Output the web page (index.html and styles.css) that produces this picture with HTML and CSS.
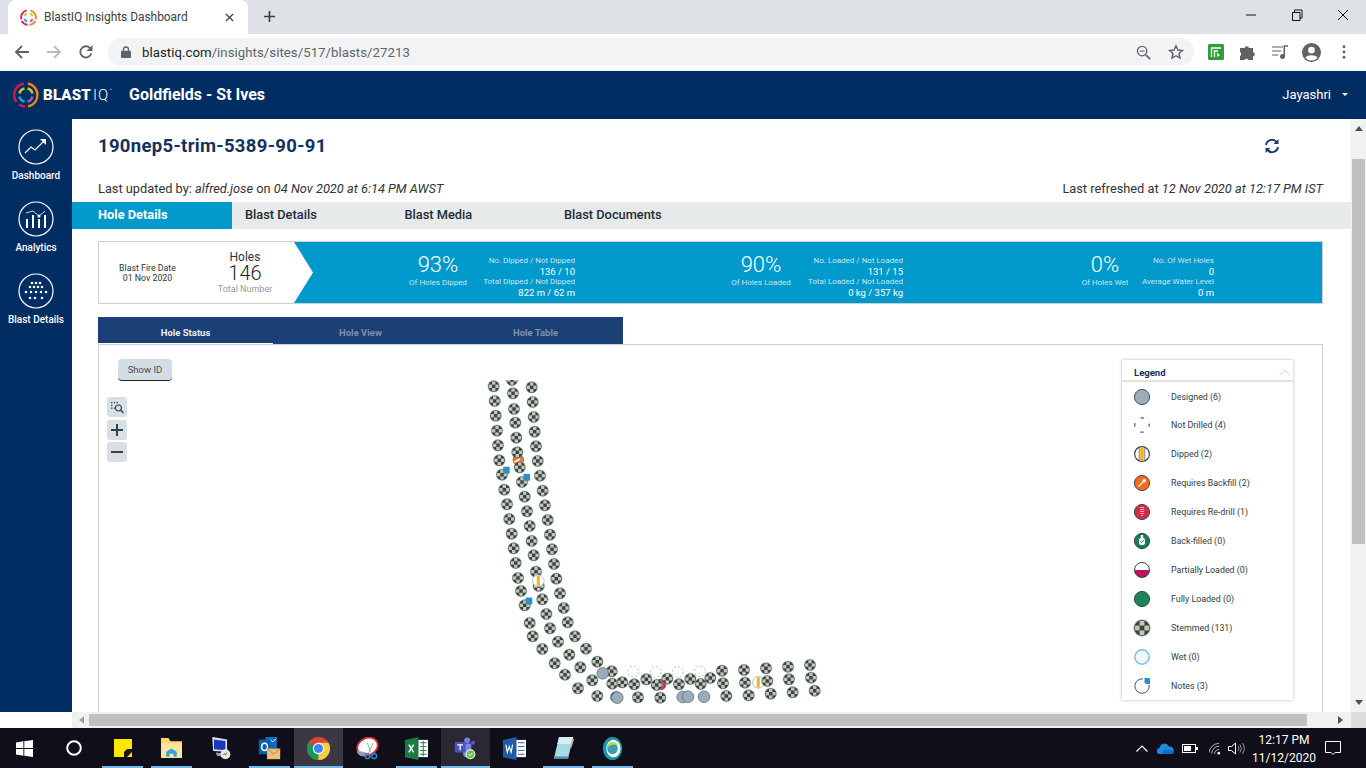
FILE: index.html
```html
<!DOCTYPE html>
<html lang="en">
<head>
<meta charset="utf-8">
<title>BlastIQ Insights Dashboard</title>
<link rel="stylesheet" href="styles.css">
</head>
<body>
<div class="screen">
  <div class="tabstrip">
    <div class="tab">
      <svg class="favicon" viewBox="-9 -9 18 18"><g fill="none" stroke-width="2"><path d="M-2-7.600A8 8 0 0 0-7.600 2" stroke="#e5176f"/><path d="M2-7.600A8 8 0 0 1 7.600 2" stroke="#f58220"/><path d="M7.200 3.600A8 8 0 0 1 1 7.900" stroke="#f58220"/><path d="M-7.200 3.600A8 8 0 0 0-1 7.900" stroke="#e5176f"/><path d="M-1.500-4.300A4.500 4.500 0 0 0-4.300-1.500" stroke="#c7c929"/><path d="M1.500-4.300A4.500 4.500 0 0 1 4.300-1.500" stroke="#c7c929"/><path d="M4.300 1.500A4.500 4.500 0 0 1 1.500 4.300" stroke="#a35bb5"/><path d="M-4.300 1.500A4.500 4.500 0 0 0-1.500 4.300" stroke="#1aa6d8"/></g></svg>
      <span class="tab-title">BlastIQ Insights Dashboard</span>
      <svg class="tab-close" viewBox="0 0 10 10"><path d="M1 1l8 8M9 1l-8 8" stroke="#4a4d51" stroke-width="1.600"/></svg>
    </div>
    <svg class="newtab" viewBox="0 0 14 14"><path d="M7 1v12M1 7h12" stroke="#3c4043" stroke-width="1.800"/></svg>
    <div class="winctl">
      <svg viewBox="0 0 46 30"><path d="M18 15h10" stroke="#111" stroke-width="1"/></svg>
      <svg viewBox="0 0 46 30"><path d="M18.500 12.500h7.500v8h-7.500zM20.500 12.500v-2.500h7.500v8h-2" fill="none" stroke="#111"/></svg>
      <svg viewBox="0 0 46 30"><path d="M18 10l10 10M28 10l-10 10" stroke="#111"/></svg>
    </div>
  </div>
  <div class="toolbar">
    <svg class="tb-icon" viewBox="0 0 16 16"><path d="M15 8H2M8 2L2 8l6 6" fill="none" stroke="#5f6368" stroke-width="1.800"/></svg>
    <svg class="tb-icon" viewBox="0 0 16 16"><path d="M1 8h13M8 2l6 6-6 6" fill="none" stroke="#b9bbbe" stroke-width="1.800"/></svg>
    <svg class="tb-icon" viewBox="0 0 16 16"><path d="M13.300 9.500A5.600 5.600 0 1 1 12 4" fill="none" stroke="#5f6368" stroke-width="1.800"/><path d="M14.500 1v6h-6z" fill="#5f6368"/></svg>
    <div class="omnibox">
      <svg class="lock" viewBox="0 0 10 12"><path d="M2.500 5V3.500a2.500 2.500 0 0 1 5 0V5" fill="none" stroke="#5f6368" stroke-width="1.300"/><rect y="4.800" width="10" height="7.200" rx="1" fill="#5f6368"/></svg>
      <span class="url"><b>blastiq.com</b>/insights/sites/517/blasts/27213</span>
      <svg class="omni-icon" viewBox="0 0 16 16"><circle cx="6.500" cy="6.500" r="5" fill="none" stroke="#5f6368" stroke-width="1.400"/><path d="M10.500 10.500L15 15" stroke="#5f6368" stroke-width="1.800"/><path d="M4 6.500h5" stroke="#5f6368" stroke-width="1.200"/></svg>
      <svg class="omni-icon star" viewBox="0 0 16 16"><path d="M8 1.800l1.900 4.200 4.500.5-3.400 3 1 4.500L8 11.700 4 14l1-4.500-3.400-3 4.500-.5z" fill="none" stroke="#5f6368" stroke-width="1.400"/></svg>
    </div>
    <svg class="ext-icon" viewBox="0 0 16 16"><rect width="16" height="16" rx="1.500" fill="#2f9e3f"/><path d="M3.500 13V4H13M6.500 13V7H10" fill="none" stroke="#fff" stroke-width="1.300"/><path d="M9 9l3 2-3 2z" fill="#fff"/></svg>
    <svg class="ext-icon" viewBox="0 0 16 16"><path d="M0 4h4.500a2.300 2.300 0 0 1 4.500 0h4v4a2.300 2.300 0 0 1 0 4.500V16H8.500a2.300 2.300 0 0 0-4 0H0v-4a2.300 2.300 0 0 0 0-4z" fill="#5f6368"/></svg>
    <svg class="ext-icon" viewBox="0 0 16 16"><path d="M0 3h11M0 7h9M0 11h6" stroke="#5f6368" stroke-width="1.200"/><circle cx="10.500" cy="12.500" r="2.500" fill="#5f6368"/><path d="M12.300 12.500V2H16" fill="none" stroke="#5f6368" stroke-width="1.500"/></svg>
    <svg class="ext-icon avatar" viewBox="0 0 20 20"><circle cx="10" cy="10" r="10" fill="#5f6368"/><circle cx="10" cy="7.500" r="3.500" fill="#fff"/><path d="M3.500 15.500c2-3.500 11-3.500 13 0a8.500 8.500 0 0 1-13 0z" fill="#fff"/></svg>
    <svg class="ext-icon dots" viewBox="0 0 4 16"><circle cx="2" cy="2" r="1.600" fill="#5f6368"/><circle cx="2" cy="8" r="1.600" fill="#5f6368"/><circle cx="2" cy="14" r="1.600" fill="#5f6368"/></svg>
  </div>
  <header class="apphead">
    <svg class="logo" viewBox="-13 -13 26 26"><g fill="none" stroke-width="2.400"><path d="M-2-11.500A11.600 11.600 0 0 0-9.500 7" stroke="#d9145f"/><path d="M-7 9.500A11.600 11.600 0 0 0-1 11.500" stroke="#d9145f"/><path d="M2-11.500A11.600 11.600 0 0 1 11.500 0A11.600 11.600 0 0 1 2 11.500" stroke="#f58220"/><path d="M-1.500-6.500A6.600 6.600 0 0 0-6.500-1.500" stroke="#c7c929"/><path d="M1.500-6.500A6.600 6.600 0 0 1 6.500-1.500" stroke="#c7c929"/><path d="M6.500 1.500A6.600 6.600 0 0 1 1.500 6.500" stroke="#a35bb5"/><path d="M-6.500 1.500A6.600 6.600 0 0 0-1.500 6.500" stroke="#1aa6d8"/></g></svg>
    <span class="wordmark"><b>BLAST</b><span class="iq">IQ</span><sup class="tm">™</sup></span>
    <span class="site">Goldfields - St Ives</span>
    <span class="user">Jayashri</span>
    <span class="caret"></span>
  </header>
  <div class="app">
    <nav class="sidebar">
      <div class="navitem">
        <svg class="navicon" viewBox="-18 -18 36 36"><circle r="17" fill="none" stroke="#fff" stroke-width="1.200"/><path d="M-11 6l6-6 4 3 9-9" fill="none" stroke="#fff" stroke-width="1.200"/><path d="M4-8h6v6z" fill="#fff"/></svg>
        <span>Dashboard</span>
      </div>
      <div class="navitem">
        <svg class="navicon" viewBox="-18 -18 36 36"><circle r="17" fill="none" stroke="#fff" stroke-width="1.200"/><path d="M-9 9v-9M-3 9v-13M3 9v-9M9 9v-13" stroke="#fff" stroke-width="2"/><path d="M-10-6l7-2 6 5 6-5" fill="none" stroke="#fff" stroke-width=".8"/><circle cx="3" cy="-3" r="1.500" fill="#fff"/></svg>
        <span>Analytics</span>
      </div>
      <div class="navitem">
        <svg class="navicon" viewBox="-18 -18 36 36"><circle r="17" fill="none" stroke="#fff" stroke-width="1.200"/><g fill="#fff"><circle cx="-4" cy="-8" r="1.300"/><circle cx="0" cy="-8" r="1.300"/><circle cx="4" cy="-8" r="1.300"/><circle cx="-6" cy="-4" r="1.300"/><circle cx="-2" cy="-4" r="1.300"/><circle cx="2" cy="-4" r="1.300"/><circle cx="6" cy="-4" r="1.300"/><circle cx="-10" cy="1" r="1.300"/><circle cx="-5" cy="1" r="1.300"/><circle cx="0" cy="1" r="1.300"/><circle cx="5" cy="1" r="1.300"/><circle cx="10" cy="1" r="1.300"/><circle cx="-6" cy="7" r="1.300"/><circle cx="-1" cy="7" r="1.300"/><circle cx="6" cy="7" r="1.300"/></g></svg>
        <span>Blast Details</span>
      </div>
    </nav>
    <div class="mainwrap">
      <div class="mainrow">
        <main class="content">
          <div class="pad">
            <div class="title-row">
              <h1>190nep5-trim-5389-90-91</h1>
              <svg class="refresh" viewBox="0 0 16 16"><g fill="none" stroke="#1a3a6b" stroke-width="2"><path d="M2 7a6 6 0 0 1 10.500-3"/><path d="M14 9a6 6 0 0 1-10.500 3"/></g><path d="M14.500 1v5h-5zM1.500 15v-5h5z" fill="#1a3a6b"/></svg>
            </div>
            <div class="meta-row">
              <span>Last updated by: <i>alfred.jose</i> on <i>04 Nov 2020 at 6:14 PM AWST</i></span>
              <span>Last refreshed at <i>12 Nov 2020 at 12:17 PM IST</i></span>
            </div>
          </div>
          <div class="maintabs">
            <span class="maintab first active">Hole Details</span>
            <span class="maintab">Blast Details</span>
            <span class="maintab">Blast Media</span>
            <span class="maintab">Blast Documents</span>
          </div>
          <div class="pad body-pad">
            <section class="summary">
              <div class="sum-left">
                <div class="fire">Blast Fire Date<br>01 Nov 2020</div>
                <div class="holes">
                  <div class="h-label">Holes</div>
                  <div class="h-num">146</div>
                  <div class="h-sub">Total Number</div>
                </div>
              </div>
              <div class="sum-blue">
                <div class="stat s1">
                  <div class="big"><div class="pct">93%</div><div class="cap">Of Holes Dipped</div></div>
                  <div class="det"><div class="cap">No. Dipped / Not Dipped</div><div class="val">136 / 10</div><div class="cap">Total Dipped / Not Dipped</div><div class="val">822 m / 62 m</div></div>
                </div>
                <div class="stat s2">
                  <div class="big"><div class="pct">90%</div><div class="cap">Of Holes Loaded</div></div>
                  <div class="det"><div class="cap">No. Loaded / Not Loaded</div><div class="val">131 / 15</div><div class="cap">Total Loaded / Not Loaded</div><div class="val">0 kg / 357 kg</div></div>
                </div>
                <div class="stat s3">
                  <div class="big"><div class="pct">0%</div><div class="cap">Of Holes Wet</div></div>
                  <div class="det"><div class="cap">No. Of Wet Holes</div><div class="val">0</div><div class="cap">Average Water Level</div><div class="val">0 m</div></div>
                </div>
              </div>
            </section>
            <div class="subtabs">
              <span class="subtab active">Hole Status</span>
              <span class="subtab">Hole View</span>
              <span class="subtab">Hole Table</span>
            </div>
            <section class="panel">
              <div class="tools">
                <button class="showid">Show ID</button>
                <div class="zoomtools">
                  <span class="zt"><svg viewBox="0 0 14 14" width="13" height="13"><g fill="#4a5a66"><rect x="0" y="1" width="1.500" height="1.500"/><rect x="3" y="1" width="1.500" height="1.500"/><rect x="6" y="1" width="1.500" height="1.500"/><rect x="0" y="4" width="1.500" height="1.500"/><rect x="0" y="7" width="1.500" height="1.500"/><rect x="3" y="7" width="1.500" height="1.500"/></g><circle cx="8" cy="7.500" r="3.200" fill="none" stroke="#33434e" stroke-width="1.200"/><path d="M10.500 10l3 3" stroke="#33434e" stroke-width="1.600"/></svg></span>
                  <span class="zt"><svg viewBox="0 0 12 12" width="12" height="12"><path d="M0 6h12M6 0v12" stroke="#33434e" stroke-width="2"/></svg></span>
                  <span class="zt"><svg viewBox="0 0 12 12" width="12" height="12"><path d="M0 6h12" stroke="#33434e" stroke-width="2"/></svg></span>
                </div>
              </div>
              <svg class="map" viewBox="98 380 1225 332">
                <defs>
                  <clipPath id="hc"><circle r="5.100"/></clipPath>
                  <g id="st"><circle r="5.800" fill="#2f4654" stroke="#aab4b8" stroke-width=".5"/><g clip-path="url(#hc)" fill="#cdc5a3"><rect x="-1.700" y="-5.200" width="3.400" height="3.500"/><rect x="-5.200" y="-1.700" width="3.500" height="3.400"/><rect x="1.700" y="-1.700" width="3.500" height="3.400"/><rect x="-1.700" y="1.700" width="3.400" height="3.500"/></g></g>
                  <g id="ds"><circle r="5.800" fill="#9aadb8" stroke="#5d717d" stroke-width=".8"/></g>
                  <g id="nd"><circle r="5.800" fill="#fff"/><circle r="5.400" fill="#fff" stroke="#aab4b8" stroke-width=".8" stroke-dasharray="2.200 2"/></g>
                  <g id="dp"><circle r="5.800" fill="#fff" stroke="#aab4b8" stroke-width=".8"/><rect x="-1.500" y="-5" width="3" height="10" fill="#f6b312"/></g>
                  <g id="nt"><path d="M-3.500-3.500h5.500a1 1 0 0 1 1 1v5a1 1 0 0 1-1 1h-4.200l-1.300-1.300z" fill="#2d8fc4"/></g>
                  <g id="bk"><circle r="5.800" fill="#f26a1b"/><path d="M-4 2l6-3" stroke="#fff" stroke-width="1.500"/></g>
                  <g id="rd"><circle r="5.800" fill="#d62b47"/><path d="M-1-4v7" stroke="#fff" stroke-width="1"/></g>
                </defs>
                <g id="holes">
                  <use href="#bk" x="518.300" y="460"/>
                  <use href="#st" x="512" y="380"/><use href="#st" x="493.700" y="386.300"/><use href="#st" x="513" y="393.300"/><use href="#st" x="531.700" y="387.300"/><use href="#st" x="494.700" y="401"/><use href="#st" x="514" y="409"/><use href="#st" x="532.700" y="402"/><use href="#st" x="495.700" y="415.700"/><use href="#st" x="515.300" y="422.700"/><use href="#st" x="533.700" y="417"/><use href="#st" x="497" y="430.700"/><use href="#st" x="516.300" y="437.700"/><use href="#st" x="534.700" y="431.700"/><use href="#st" x="498" y="445.300"/><use href="#st" x="517.300" y="452.300"/><use href="#st" x="536" y="446.300"/>
                  <use href="#st" x="499.300" y="460.300"/><use href="#st" x="519.700" y="467.300"/><use href="#st" x="537.700" y="461"/><use href="#st" x="502" y="474.700"/><use href="#st" x="522" y="482"/><use href="#st" x="540" y="475.700"/><use href="#st" x="504.300" y="489.700"/><use href="#st" x="524.700" y="496.700"/><use href="#st" x="542.700" y="490.700"/><use href="#st" x="507" y="504.300"/><use href="#st" x="527" y="511.300"/><use href="#st" x="545" y="505.300"/><use href="#st" x="509.300" y="519"/><use href="#st" x="529.700" y="526"/><use href="#st" x="547.700" y="520"/><use href="#st" x="511.700" y="533.700"/><use href="#st" x="531.700" y="541"/><use href="#st" x="550" y="534.700"/>
                  <use href="#st" x="513.700" y="548.300"/><use href="#st" x="533.700" y="555.300"/><use href="#st" x="552" y="549.300"/><use href="#st" x="515.700" y="563"/><use href="#st" x="536" y="571.700"/><use href="#st" x="554" y="564"/><use href="#st" x="518" y="578"/><use href="#st" x="538.700" y="586"/><use href="#dp" x="538.300" y="580.700"/><use href="#st" x="556.300" y="578.700"/><use href="#st" x="521" y="591"/><use href="#st" x="542.300" y="599.300"/><use href="#st" x="560" y="593.300"/><use href="#st" x="524.700" y="605.300"/><use href="#st" x="546.300" y="614"/><use href="#st" x="563.700" y="608"/><use href="#st" x="529.700" y="623"/><use href="#st" x="550" y="628.300"/><use href="#st" x="567.700" y="622.300"/><use href="#st" x="532.700" y="636.300"/><use href="#st" x="558" y="641.700"/><use href="#st" x="575" y="636.300"/><use href="#st" x="542.300" y="649"/><use href="#st" x="569.300" y="654.700"/><use href="#st" x="586" y="648.700"/><use href="#st" x="554.700" y="663.300"/><use href="#st" x="580.300" y="667.300"/><use href="#st" x="597.300" y="661.700"/><use href="#st" x="565" y="674.700"/><use href="#st" x="592.300" y="680.300"/><use href="#st" x="578" y="688.300"/><use href="#st" x="597.300" y="696"/>
                  <use href="#nd" x="633.300" y="671.700"/><use href="#nd" x="655.700" y="672"/><use href="#nd" x="677.700" y="672"/><use href="#nd" x="700" y="671.300"/>
                  <use href="#st" x="611.700" y="671.300"/><use href="#ds" x="602.700" y="673.300"/>
                  <use href="#st" x="612.300" y="683.700"/><use href="#st" x="622.300" y="682.300"/><use href="#st" x="634.300" y="684.300"/><use href="#st" x="646.300" y="679.300"/><use href="#rd" x="660.500" y="684.500"/><use href="#st" x="656.700" y="685"/><use href="#st" x="667.300" y="678.700"/><use href="#st" x="679" y="684.300"/><use href="#st" x="690.300" y="679"/><use href="#st" x="700.700" y="684"/><use href="#st" x="710.300" y="678"/><use href="#st" x="722" y="670.700"/><use href="#st" x="723" y="683.300"/><use href="#st" x="726.300" y="696"/><use href="#st" x="744" y="670"/><use href="#st" x="745" y="682.700"/><use href="#st" x="748.700" y="695.300"/><use href="#dp" x="758.300" y="682.300"/><use href="#st" x="766" y="668.300"/><use href="#st" x="767.300" y="681"/><use href="#st" x="770.700" y="693.700"/><use href="#st" x="788" y="666.700"/><use href="#st" x="789" y="679.300"/><use href="#st" x="792.700" y="692.300"/><use href="#st" x="810" y="665"/><use href="#st" x="811" y="677.700"/><use href="#st" x="814.700" y="690.700"/>
                  <use href="#st" x="616" y="697"/><use href="#ds" x="617.300" y="697.700"/><use href="#st" x="638" y="697.300"/><use href="#st" x="660.300" y="697.700"/><use href="#ds" x="682.700" y="697"/><use href="#ds" x="688" y="696.700"/><use href="#ds" x="704" y="696.700"/>
                  <use href="#nt" x="506.700" y="470.300"/><use href="#nt" x="527" y="477.300"/><use href="#nt" x="529.300" y="601"/>
                </g>
              </svg>
              <aside class="legend">
                <div class="leg-head"><span>Legend</span><svg viewBox="0 0 12 7" width="12" height="7"><path d="M.5 6.500L6 1l5.500 5.500" fill="none" stroke="#cfd4d8"/></svg></div>
                <div class="leg-row"><svg viewBox="-9 -9 18 18"><circle r="7.600" fill="#9aadb8" stroke="#3f5561"/></svg><span>Designed (6)</span></div>
                <div class="leg-row"><svg viewBox="-9 -9 18 18"><circle r="7.200" fill="#fff" stroke="#4a5a66" stroke-width="1.200" stroke-dasharray="3.500 7.810" stroke-dashoffset="1.750"/></svg><span>Not Drilled (4)</span></div>
                <div class="leg-row"><svg viewBox="-9 -9 18 18"><circle r="7.400" fill="#fff" stroke="#33474f" stroke-width="1.200"/><rect x="-1.800" y="-7" width="3.600" height="14" fill="#f6b312"/><path d="M-2.800-6.600V6.600M2.800-6.600V6.600" stroke="#33474f" stroke-width=".7"/></svg><span>Dipped (2)</span></div>
                <div class="leg-row"><svg viewBox="-9 -9 18 18"><circle r="7.600" fill="#f26a1b" stroke="#3f4d55"/><path d="M-3.500 3.500L2 -2" stroke="#fff" stroke-width="1.300"/><circle cx="2.300" cy="-2.300" r="1.800" fill="#fff"/></svg><span>Requires Backfill (2)</span></div>
                <div class="leg-row"><svg viewBox="-9 -9 18 18"><circle r="7.600" fill="#d62b47" stroke="#3f4d55"/><path d="M-2-4.500h4M-2.200-2.500h4.400M-2-.5h4M-1.600 1.500h3.200M-.8 3.500h1.600" stroke="#f3b6bf" stroke-width="1"/></svg><span>Requires Re-drill (1)</span></div>
                <div class="leg-row"><svg viewBox="-9 -9 18 18"><circle r="7.600" fill="#1d7a58" stroke="#33474f"/><rect x="-3" y="-3" width="6" height="7" rx="2" fill="#fff"/><rect x="-1.200" y="-6" width="2.400" height="4" fill="#fff"/><path d="M-1.500.5l1.200 1.200 2-2.500" fill="none" stroke="#1d7a58"/></svg><span>Back-filled (0)</span></div>
                <div class="leg-row"><svg viewBox="-9 -9 18 18"><circle r="7.500" fill="#fff"/><path d="M-7.500 0h15a7.500 7.500 0 0 1-15 0z" fill="#c0125c"/><circle r="7.500" fill="none" stroke="#33474f"/></svg><span>Partially Loaded (0)</span></div>
                <div class="leg-row"><svg viewBox="-9 -9 18 18"><circle r="7.600" fill="#1d8459" stroke="#33474f"/></svg><span>Fully Loaded (0)</span></div>
                <div class="leg-row"><svg viewBox="-9 -9 18 18"><use href="#st" transform="scale(1.420)"/></svg><span>Stemmed (131)</span></div>
                <div class="leg-row"><svg viewBox="-9 -9 18 18"><circle r="7.200" fill="#f3f6f8" stroke="#72c2ea" stroke-width="1.500"/></svg><span>Wet (0)</span></div>
                <div class="leg-row"><svg viewBox="-9 -9 18 18"><path d="M1-7.100A7.200 7.200 0 1 0 7.200-1" fill="#fff" stroke="#42535e"/><path d="M2.500-8h4.500a1 1 0 0 1 1 1v5H4l-1.500-1.500z" fill="#2d8fc4"/></svg><span>Notes (3)</span></div>
              </aside>
            </section>
          </div>
        </main>
        <div class="vscroll">
          <span class="arrow up"></span>
          <span class="vthumb"></span>
          <span class="arrow down"></span>
        </div>
      </div>
      <div class="hscrollrow">
        <div class="hscroll">
          <span class="arrow left"></span>
          <span class="hthumb"></span>
          <span class="arrow right"></span>
        </div>
        <div class="corner"></div>
      </div>
    </div>
  </div>
  <footer class="taskbar">
    <div class="task"><svg class="ic-win" viewBox="0 0 17 17"><path d="M0 2.400L7.400 1.300v6.700H0zM8.300 1.200L17 0v8H8.300zM0 9h7.400v6.700L0 14.600zM8.300 9H17v8l-8.700-1.200z" fill="#fff"/></svg></div>
    <div class="task"><svg class="ic-cortana" viewBox="0 0 16 16"><circle cx="8" cy="8" r="6.800" fill="none" stroke="#fff" stroke-width="2"/></svg></div>
    <div class="task open"><svg class="ic-sticky" viewBox="0 0 18 18"><rect width="18" height="18" fill="#ffe600"/><path d="M18 10v3l-5 5h-3v-5l3-3z" fill="#151515"/></svg></div>
    <div class="task open"><svg viewBox="0 0 22 22"><path d="M1 1h7l2 3h11v16H1z" fill="#ffd86b"/><path d="M1 6h20v14H1z" fill="#f6e6a0"/><path d="M6 19v-5l5-3 5 3v5h-3v-3H9v3z" fill="#2fa3dc"/></svg></div>
    <div class="task"><svg viewBox="0 0 24 28"><path d="M2 0l18 3v15L3 17z" fill="#dfe3e8"/><path d="M4 3l14 2v11L4 15z" fill="#1a38b8"/><path d="M6 19l10 1 2 3H8z" fill="#9aa0a6"/><circle cx="18" cy="21" r="6" fill="#e8e8e8"/><path d="M15 22l2-2 1 2 2-3" fill="none" stroke="#2e8b3a" stroke-width="1.200"/></svg></div>
    <div class="task open"><svg viewBox="0 0 26 28"><rect x="8" y="0" width="14" height="14" fill="#0f6cbd"/><path d="M14 3l3 3 4-4" fill="none" stroke="#fff" stroke-width="1.200"/><rect x="0" y="3" width="14" height="18" fill="#0a5cb0"/><ellipse cx="7" cy="12" rx="3.500" ry="4.500" fill="none" stroke="#fff" stroke-width="1.800"/><rect x="10" y="14" width="16" height="13" fill="#f0bd7a"/><path d="M10 14l8 7 8-7" fill="none" stroke="#b5793a"/></svg></div>
    <div class="task open active"><svg viewBox="0 0 24 24"><circle cx="12" cy="12" r="12" fill="#db4437"/><path d="M12 12L1.600 6A12 12 0 0 0 12 24z" fill="#0f9d58"/><path d="M12 6h10.400A12 12 0 0 1 12 24z" fill="#ffcd40"/><circle cx="12" cy="12" r="6" fill="#fff"/><circle cx="12" cy="12" r="4.800" fill="#4285f4"/></svg></div>
    <div class="task"><svg viewBox="0 0 24 24"><ellipse cx="12" cy="10" rx="11" ry="9" fill="#fff" stroke="#cf2f3b" stroke-width="2" transform="rotate(-25 12 10)"/><path d="M1 14c0 4 3 6 7 6l6-3" fill="#9a9ea3"/><path d="M12 6l3 10M18 6l-5 11" stroke="#9aa3aa" stroke-width="1"/><circle cx="12" cy="20" r="2.500" fill="none" stroke="#1b8fd0" stroke-width="1.500"/><circle cx="19" cy="20" r="2.500" fill="none" stroke="#1b8fd0" stroke-width="1.500"/></svg></div>
    <div class="task open"><svg viewBox="0 0 24 24"><path d="M0 3l14-3v24L0 21z" fill="#1a7a45"/><path d="M14 3h10v18H14z" fill="#fff"/><path d="M15.500 6h7M15.500 10h7M15.500 14h7M15.500 18h7M19 4v16" stroke="#1a7a45"/><path d="M4 8l5 8M9 8l-5 8" stroke="#fff" stroke-width="1.600"/></svg></div>
    <div class="task open teams"><svg viewBox="0 0 26 28"><circle cx="15" cy="4" r="3.500" fill="#7b83eb"/><circle cx="22" cy="7" r="2.500" fill="#5059c9"/><path d="M10 8h10v12a5 5 0 0 1-10 0z" fill="#7b83eb"/><rect x="0" y="6" width="13" height="13" rx="1" fill="#4b53bc"/><path d="M3 9.500h7M6.500 9.500V16" stroke="#fff" stroke-width="1.600"/><circle cx="19" cy="21" r="6" fill="#fff"/><circle cx="19" cy="21" r="4.800" fill="#6cc04a"/><path d="M16.800 21l1.600 1.700 3-3.200" fill="none" stroke="#fff" stroke-width="1.200"/></svg></div>
    <div class="task"><svg viewBox="0 0 24 24"><path d="M0 3l14-3v24L0 21z" fill="#1f5ba8"/><path d="M14 3h10v18H14z" fill="#fff"/><path d="M15.500 6h7M15.500 10h7M15.500 14h7M15.500 18h7" stroke="#1f5ba8"/><path d="M3 8l1.500 8 2-6 2 6L10 8" fill="none" stroke="#fff" stroke-width="1.200"/></svg></div>
    <div class="task open"><svg viewBox="0 0 22 26"><path d="M6 0h16l-6 25H0z" fill="#a8d9e6"/><path d="M6 0h16l-2 8H4z" fill="#d7eef2"/><path d="M0 25h16l1-3H1z" fill="#5e8a93"/><path d="M19 12l3-10" stroke="#c8b88e" stroke-width="2"/></svg></div>
    <div class="task open"><svg viewBox="0 0 22 26"><ellipse cx="11" cy="13" rx="11" ry="13" fill="#1797a8"/><ellipse cx="12" cy="13" rx="8" ry="10" fill="#fff"/><ellipse cx="11" cy="13" rx="6" ry="6.500" fill="#3e9cb0"/><path d="M5 13a6 6 0 0 1 12-3a8 8 0 0 0-12 3z" fill="#b6d957"/></svg></div>
    <div class="tray">
      <svg class="t1" viewBox="0 0 12 7"><path d="M.5 6.500L6 1l5.500 5.500" fill="none" stroke="#fff" stroke-width="1.200"/></svg>
      <svg class="t2" viewBox="0 0 17 11"><path d="M3 11a3 3 0 0 1-.5-6A5 5 0 0 1 12 3.500 3.800 3.800 0 0 1 13.500 11z" fill="#1e88dc"/><path d="M5 11c0-3 3-5 6-4 3 0 5 1 6 2-.5 1.500-2 2-3.500 2z" fill="#0f6ac0"/></svg>
      <svg class="t3" viewBox="0 0 16 9"><rect x=".5" y=".5" width="13" height="8" fill="none" stroke="#fff"/><rect x="2" y="2" width="7" height="5" fill="#fff"/><rect x="14" y="3" width="2" height="3" fill="#fff"/></svg>
      <svg class="t4" viewBox="0 0 14 13"><g fill="none" stroke="#cfcfcf" stroke-width=".9"><path d="M0 11A11 11 0 0 1 11 1"/><path d="M3 12A8 8 0 0 1 11 4"/><path d="M6 12.500A5 5 0 0 1 11 7.500"/></g><circle cx="10.500" cy="11.500" r="1.400" fill="#fff"/></svg>
      <svg class="t5" viewBox="0 0 17 13"><path d="M.5 4.500h3l4-3.500v11l-4-3.500h-3z" fill="none" stroke="#fff"/><path d="M10 4a4 4 0 0 1 0 5M12 2.500a7 7 0 0 1 0 8M14.500 1a10 10 0 0 1 0 11" fill="none" stroke="#9a9a9a"/></svg>
      <div class="clock"><span>12:17 PM</span><span>11/12/2020</span></div>
      <svg class="t6" viewBox="0 0 16 16"><path d="M.5 1.500h15v11H10l-2 2-2-2H.5z" fill="none" stroke="#fff"/></svg>
    </div>
  </footer>
</div>
</body>
</html>
```

FILE: styles.css
```css
* { box-sizing: border-box; }
html, body { margin: 0; padding: 0; overflow: hidden; }
body { font-family: Roboto, "Liberation Sans", sans-serif; color: #222; }
.screen { width: 1366px; height: 768px; display: flex; flex-direction: column; overflow: hidden; }

/* browser chrome */
.tabstrip { height: 34px; background: #dee1e6; display: flex; align-items: stretch; flex: none; }
.tab { width: 240px; margin-left: 8px; background: #fff; border-radius: 8px 8px 0 0; display: flex; align-items: center; padding: 0 12px 0 12px; }
.favicon { width: 17px; height: 17px; margin-right: 7px; }
.tab-title { font-size: 12px; color: #3c4043; flex: 1; white-space: nowrap; letter-spacing: -.05px; }
.tab-close { width: 9px; height: 9px; margin-right: 2px; }
.newtab { width: 13px; height: 13px; margin: 10px 0 0 15px; }
.winctl { margin-left: auto; display: flex; }
.winctl svg { width: 46px; height: 30px; }
.toolbar { height: 37px; background: #fff; display: flex; align-items: center; flex: none; padding-left: 14px; border-bottom: 1px solid #f0f0f0; }
.tb-icon { width: 16px; height: 16px; margin-right: 16px; }
.omnibox { width: 1086px; height: 28px; margin-left: -2px; background: #f1f3f4; border-radius: 14px; display: flex; align-items: center; padding-left: 13px; margin-right: 14px; }
.lock { width: 10px; height: 12px; margin-right: 11px; }
.url { font-size: 13.200px; color: #5f6368; flex: 1; letter-spacing: .05px; }
.url b { font-weight: 400; color: #202124; }
.omni-icon { width: 15px; height: 15px; margin-right: 10px; }
.star { width: 16px; height: 16px; margin: 0 10px 0 7px; }
.ext-icon { width: 16px; height: 16px; margin-right: 16px; }
.avatar { width: 19px; height: 19px; margin-right: 14px; margin-left: -2px; }
.dots { width: 4px; height: 14px; margin-left: 7px; margin-right: 0; }

/* app header */
.apphead { height: 48px; background: #002d62; display: flex; align-items: center; flex: none; color: #fff; padding: 0 0 2px 13px; }
.logo { width: 26px; height: 26px; margin: 2px 4px 0 0; }
.wordmark { font-size: 15px; font-weight: 300; width: 69px; white-space: nowrap; margin-top: 2px; }
.wordmark b { font-weight: 900; letter-spacing: .2px; }
.iq { margin-left: 2px; letter-spacing: 1px; }
.tm { font-size: 5px; vertical-align: 8px; line-height: 0; }
.site { font-size: 16px; font-weight: 700; margin-left: 17px; }
.user { margin-left: auto; font-size: 13px; }
.caret { width: 0; height: 0; border: 3px solid transparent; border-top: 3px solid #fff; border-bottom: 0; margin: 1px 18px 0 11px; }

/* app body */
.app { flex: 1; display: flex; min-height: 0; }
.sidebar { width: 72px; flex: none; background: #002d62; height: 593px; display: flex; flex-direction: column; align-items: center; padding-top: 10px; }
.navitem { height: 72px; display: flex; flex-direction: column; align-items: center; color: #fff; font-size: 10px; font-weight: 500; }
.navicon { width: 36px; height: 36px; margin-bottom: 5px; }
.mainwrap { flex: 1; display: flex; flex-direction: column; min-width: 0; height: 609px; }
.mainrow { height: 593px; display: flex; flex: none; }
.content { flex: 1; min-width: 0; overflow: hidden; background: #fff; display: flex; flex-direction: column; }
.pad { padding: 0 28px 0 26px; }
.title-row { height: 52px; padding-top: 2px; display: flex; align-items: center; justify-content: space-between; }
h1 { margin: 0; font-size: 18.500px; font-weight: 700; color: #15305c; letter-spacing: .32px; }
.refresh { width: 16px; height: 16px; margin-right: 43px; }
.meta-row { height: 31px; padding-top: 3px; display: flex; align-items: center; justify-content: space-between; font-size: 12.800px; color: #333; }
.maintabs { height: 27px; background: #e7eaea; display: flex; flex: none; }
.maintab { width: 159.500px; padding-left: 13px; font-size: 12.800px; font-weight: 500; line-height: 26px; color: #222c36; }
.maintab.first { width: 160px; padding-left: 26px; }
.maintab.active { background: #0099cc; color: #fff; font-weight: 700; }
.body-pad { flex: 1; display: flex; flex-direction: column; min-height: 0; }

.summary { margin-top: 12px; height: 63px; display: flex; flex: none; border: 1px solid #cfcfcf; position: relative; }
.sum-left { width: 195px; flex: none; display: flex; background: #fff; }
.fire { width: 97px; text-align: center; font-size: 8.800px; line-height: 10px; color: #333; padding-top: 21px; }
.holes { flex: 1; text-align: center; }
.h-label { font-size: 12px; line-height: 12px; margin-top: 9px; color: #333; }
.h-num { font-size: 20px; font-weight: 300; line-height: 19px; margin-top: 1px; color: #222; }
.h-sub { font-size: 9px; color: #999; line-height: 13px; }
.sum-blue { flex: 1; background: #0099cc; display: flex; color: #fff; position: relative; }
.sum-blue::before { content: ""; position: absolute; left: 0; top: 0; bottom: 0; width: 19px; background: #fff; clip-path: polygon(0 0, 100% 50%, 0 100%); }
.stat { display: flex; }
.s1 { margin-left: 104px; }
.s2 { margin-left: 146px; }
.s3 { margin-left: 162px; }
.big { width: 80px; text-align: center; padding-top: 10px; }
.pct { font-size: 22px; font-weight: 300; line-height: 26px; }
.cap { font-size: 8px; line-height: 10px; color: #c8e8f4; white-space: nowrap; }
.val { font-size: 9.500px; line-height: 11px; }
.det { text-align: right; padding-top: 14px; }
.s1 .det { width: 97px; }
.s2 .det { width: 102px; }
.s3 .det { width: 73px; margin-left: -4px; }

.subtabs { margin-top: 13px; height: 27px; width: 525px; display: flex; background: #1a4075; flex: none; }
.subtab { flex: 1; text-align: center; font-size: 9.500px; font-weight: 700; line-height: 32px; color: #7d90ac; }
.subtab.active { color: #e8eef5; border-bottom: 1px solid #fff; }
.panel { flex: 1; min-height: 0; border: 1px solid #cfcfcf; border-bottom: 0; position: relative; overflow: hidden; display: flex; }
.tools { width: 100px; flex: none; padding: 14px 0 0 8px; z-index: 1; }
.showid { display: block; width: 54px; height: 22px; margin-left: 11px; padding: 0; border: 0; border-bottom: 1px solid #222; border-radius: 4px; background: #d3dde4; font: 9.500px Roboto, sans-serif; color: #4a4f55; }
.zoomtools { margin-top: 16px; display: flex; flex-direction: column; gap: 2.500px; }
.zt { width: 20px; height: 20px; border-radius: 3px; background: #d8e0e6; display: flex; align-items: center; justify-content: center; }
.map { position: absolute; left: -1px; top: 35px; width: 1225px; height: 332px; }
.legend { position: absolute; right: 29px; top: 15px; width: 171px; background: #fff; box-shadow: 0 0 3px rgba(0,0,0,.3); }
.leg-head { height: 22px; border-bottom: 2px solid #e2e2e2; display: flex; align-items: center; justify-content: space-between; padding: 5px 2px 0 12px; font-size: 9.500px; font-weight: 700; color: #15305c; }
.leg-row { height: 29px; display: flex; align-items: center; font-size: 8.900px; color: #333b43; }
.leg-head + .leg-row { height: 28px; padding-top: 2px; }
.leg-row svg { width: 18px; height: 18px; margin: 0 20px 0 11px; }

.vscroll { width: 15px; flex: none; background: #f1f1f1; display: flex; flex-direction: column; align-items: center; padding-top: 7px; }
.vthumb { width: 13px; height: 385px; background: #c1c1c1; margin-top: 28px; }
.hscrollrow { height: 16px; display: flex; background: #f1f1f1; flex: none; }
.hscroll { flex: 1; display: flex; align-items: center; padding-left: 7px; }
.hthumb { width: 1218px; height: 12px; background: #c1c1c1; margin-left: 5px; }
.corner { width: 15px; background: #dcdcdc; }
.arrow { width: 0; height: 0; border: 4px solid transparent; flex: none; }
.arrow.up { border-bottom: 5px solid #505050; border-top: 0; }
.arrow.down { border-top: 5px solid #505050; border-bottom: 0; margin-top: 156px; }
.arrow.left { border-right: 5px solid #a3a3a3; border-left: 0; }
.arrow.right { border-left: 5px solid #505050; border-right: 0; margin-left: 31px; }

/* taskbar */
.taskbar { height: 40px; flex: none; background: #100e18; display: flex; align-items: stretch; }
.task { width: 49px; flex: none; display: flex; align-items: center; justify-content: center; position: relative; }
.task svg { width: 23px; height: 23px; }
.task .ic-win { width: 17px; height: 17px; }
.task .ic-cortana { width: 16px; height: 16px; }
.task .ic-sticky { width: 18px; height: 18px; }
.task.open::after { content: ""; position: absolute; left: 4px; right: 4px; bottom: 0; height: 2px; background: #76b9ed; }
.task.active { background: #3b3843; }
.task.active::after, .task.teams::after { left: 0; right: 0; }
.task.teams { background: #2a2833; }
.tray { margin-left: auto; display: flex; align-items: center; color: #fff; padding-right: 25px; }
.t1 { width: 12px; height: 7px; margin-right: 9px; }
.t2 { width: 17px; height: 11px; margin-right: 8px; }
.t3 { width: 16px; height: 9px; margin-right: 11px; }
.t4 { width: 13px; height: 13px; margin-right: 6px; }
.t5 { width: 17px; height: 13px; margin-right: 6px; }
.clock { display: flex; flex-direction: column; align-items: center; font-size: 12px; line-height: 18px; width: 66px; padding-top: 2px; }
.t6 { width: 16px; height: 16px; margin-left: 8px; }
```
